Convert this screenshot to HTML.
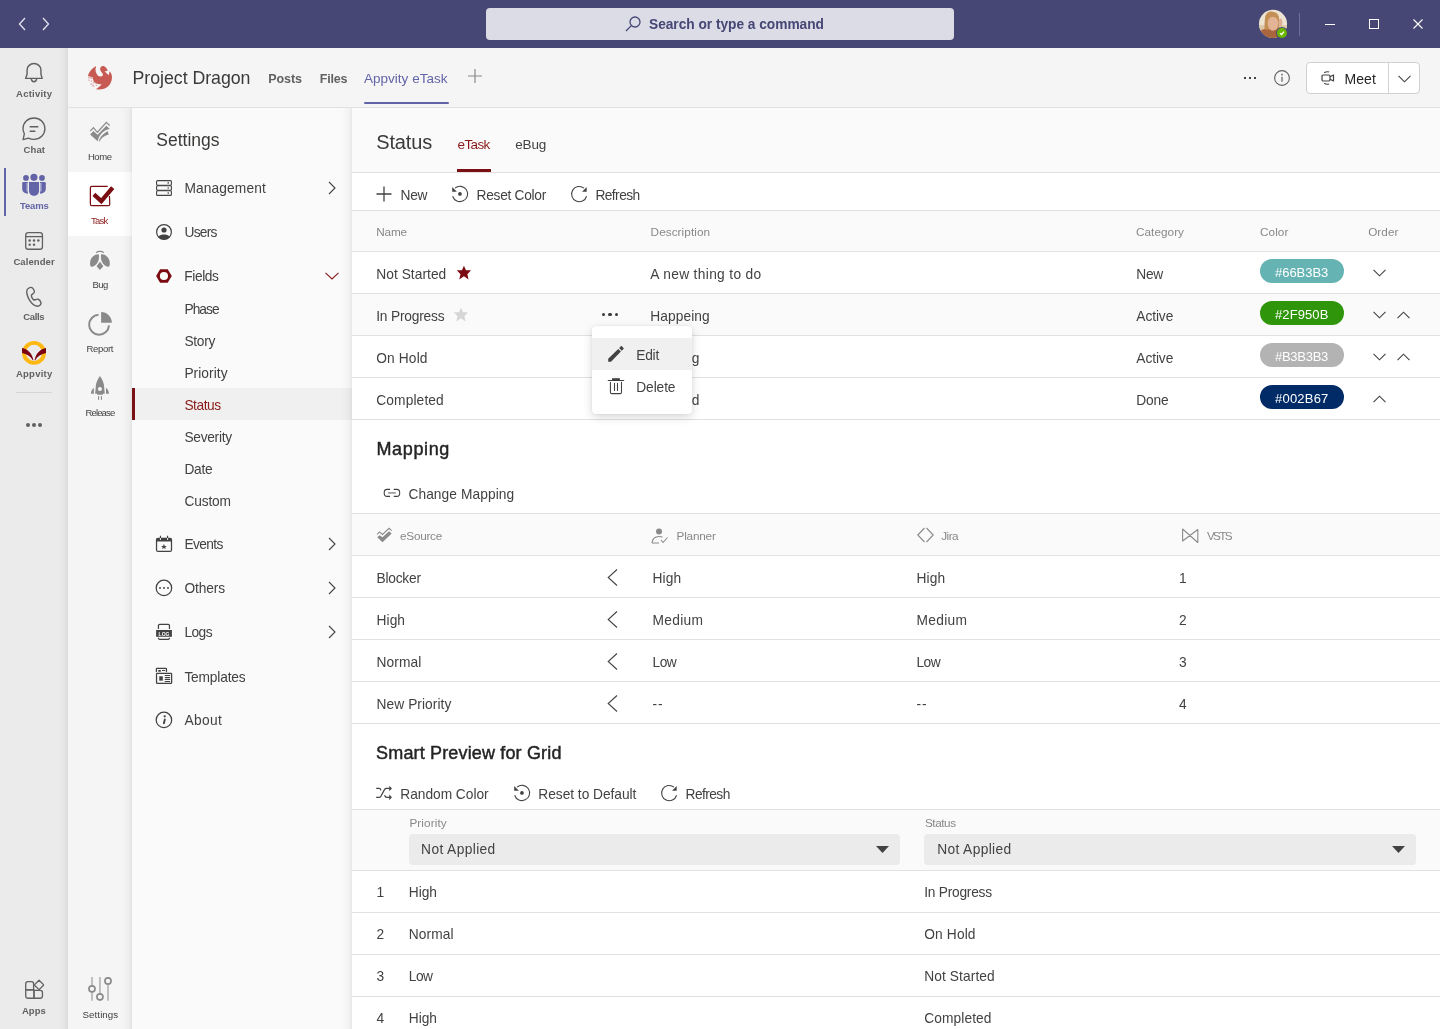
<!DOCTYPE html>
<html><head><meta charset="utf-8">
<style>
*{box-sizing:border-box;margin:0;padding:0}
html,body{width:1440px;height:1029px;overflow:hidden;background:#fff;font-family:"Liberation Sans",sans-serif;color:#424242}
.a{position:absolute}
.t{position:absolute;white-space:nowrap;line-height:1}
svg{overflow:visible}
</style></head><body><div id="root" style="position:absolute;left:0;top:0;width:1440px;height:1029px;overflow:hidden;will-change:transform">
<div class="a" style="left:0px;top:0px;width:1440px;height:48px;background:#464775;"></div>
<svg class="a" style="left:18px;top:17px;" width="8" height="14" viewBox="0 0 8 14"><path d="M7 1 L1.5 7 L7 13" fill="none" stroke="#e4e4f0" stroke-width="1.3"/></svg>
<svg class="a" style="left:42px;top:17px;" width="8" height="14" viewBox="0 0 8 14"><path d="M1 1 L6.5 7 L1 13" fill="none" stroke="#e4e4f0" stroke-width="1.3"/></svg>
<div class="a" style="left:486px;top:8px;width:468px;height:32px;background:#dcdce6;border-radius:4px;"></div>
<svg class="a" style="left:625px;top:16px;" width="16" height="16" viewBox="0 0 16 16"><circle cx="10" cy="6" r="5" fill="none" stroke="#464775" stroke-width="1.3"/><path d="M6.4 9.6 L1 15" stroke="#464775" stroke-width="1.3"/></svg>
<div class="t" style="left:649.00px;top:18.00px;font-size:13.75px;color:#464775;font-weight:700;letter-spacing:-0.033px;">Search or type a command</div>
<svg class="a" style="left:1256px;top:8px" width="34" height="34" viewBox="0 0 1029 1029.0"><defs><clipPath id="av"><circle cx="515" cy="480" r="425"/></clipPath></defs><g clip-path="url(#av)"><rect width="1029" height="1029" fill="#ede3d3"/><rect x="0" y="520" width="1029" height="200" fill="#d9c7a8"/><path d="M270 330 C280 150 400 100 500 110 C640 120 720 220 700 420 L700 950 L240 950 C260 700 250 500 270 330Z" fill="#c48f55"/><path d="M120 700 C200 620 300 640 380 660 L640 660 C700 700 760 760 800 950 L100 950Z" fill="#a8653e"/><ellipse cx="515" cy="470" rx="160" ry="215" fill="#e2b394"/><path d="M330 300 C400 200 560 190 660 330 C600 250 420 240 330 300Z" fill="#c48f55"/><ellipse cx="745" cy="440" rx="55" ry="120" fill="#dcae95"/></g><circle cx="785" cy="755" r="180" fill="#464775"/><circle cx="785" cy="755" r="152" fill="#6bb700"/><path d="M725 765 L775 805 L845 715" fill="none" stroke="#fff" stroke-width="42"/></svg>
<div class="a" style="left:1299px;top:13px;width:1px;height:23px;background:#6e6f98;"></div>
<div class="a" style="left:1325px;top:24px;width:10px;height:1px;background:#fff;"></div>
<div class="a" style="left:1369px;top:19px;width:10px;height:10px;border:1px solid #fff"></div>
<svg class="a" style="left:1413px;top:19px;" width="10" height="10" viewBox="0 0 10 10"><path d="M0.5 0.5 L9.5 9.5 M9.5 0.5 L0.5 9.5" stroke="#fff" stroke-width="1.1"/></svg>
<div class="a" style="left:0px;top:48px;width:68px;height:981px;background:#ebebeb;"></div>
<svg class="a" style="left:20px;top:58px" width="28" height="28" viewBox="0 0 1029 1029.0"><path d="M260 600 L260 440 C260 300 380 205 512 205 C645 205 770 300 770 440 L770 600 L815 750 L205 750Z" fill="none" stroke="#616161" stroke-width="52" stroke-linejoin="round"/><path d="M412 760 C420 830 460 870 512 870 C565 870 605 830 612 760" fill="none" stroke="#616161" stroke-width="52"/></svg>
<div class="t" style="left:16.10px;top:89.00px;font-size:9.5px;color:#616161;font-weight:700;letter-spacing:0.229px;">Activity</div>
<svg class="a" style="left:20px;top:114px" width="28" height="28" viewBox="0 0 1029 1029.0"><path d="M160 720 C125 660 110 600 110 540 C110 320 290 145 512 145 C735 145 915 320 915 540 C915 760 735 935 512 935 C430 935 365 915 310 885 L115 940 Z" fill="none" stroke="#616161" stroke-width="50" stroke-linejoin="round"/><path d="M375 465 H655 M375 630 H545" stroke="#616161" stroke-width="55" stroke-linecap="round"/></svg>
<div class="t" style="left:23.50px;top:145.00px;font-size:9.5px;color:#616161;font-weight:700;letter-spacing:0.133px;">Chat</div>
<div class="a" style="left:4px;top:168px;width:2px;height:48px;background:#6264a7;"></div>
<svg class="a" style="left:20px;top:170px" width="28" height="28" viewBox="0 0 1029 1029.0"><g fill="#6264a7"><circle cx="220" cy="290" r="105"/><circle cx="512" cy="270" r="130"/><circle cx="808" cy="290" r="105"/><path d="M125 445 H290 V870 C165 870 80 790 80 690 V490 Q80 445 125 445Z"/><path d="M903 445 H738 V870 C863 870 948 790 948 690 V490 Q948 445 903 445Z"/><path d="M330 445 H700 V760 C700 870 615 945 515 945 C415 945 330 870 330 760Z"/></g><path d="M265 480 V790 M765 480 V790" stroke="#b3b4d6" stroke-width="50"/></svg>
<div class="t" style="left:20.00px;top:201.00px;font-size:9.5px;color:#6264a7;font-weight:700;letter-spacing:-0.175px;">Teams</div>
<svg class="a" style="left:20px;top:226px" width="28" height="28" viewBox="0 0 1029 1029.0"><rect x="210" y="245" width="615" height="610" rx="95" fill="none" stroke="#616161" stroke-width="48"/><path d="M210 390 H825" stroke="#616161" stroke-width="48"/><g fill="#616161"><circle cx="355" cy="535" r="45"/><circle cx="515" cy="535" r="45"/><circle cx="675" cy="535" r="45"/><circle cx="355" cy="685" r="45"/><circle cx="515" cy="685" r="45"/></g></svg>
<div class="t" style="left:13.40px;top:257.00px;font-size:9.5px;color:#616161;font-weight:700;letter-spacing:0.079px;">Calender</div>
<svg class="a" style="left:20px;top:282px" width="28" height="28" viewBox="0 0 1029 1029.0"><path d="M300 240 C360 200 430 185 465 225 C520 290 540 340 520 385 C500 425 445 440 425 475 C400 525 455 620 515 665 C565 650 620 620 665 632 C710 645 755 705 772 760 C785 820 725 880 640 890 C520 882 420 790 340 650 C270 520 240 420 250 330 C255 290 270 260 300 240Z" fill="none" stroke="#616161" stroke-width="52" stroke-linejoin="round"/></svg>
<div class="t" style="left:23.20px;top:312.00px;font-size:9.5px;color:#616161;font-weight:700;letter-spacing:-0.350px;">Calls</div>
<svg class="a" style="left:20px;top:339px" width="28" height="28" viewBox="0 0 1029 1029.0"><circle cx="515" cy="510" r="368" fill="none" stroke="#fdb813" stroke-width="145"/><path d="M75 330 C260 370 440 500 495 785 L470 785 C390 630 250 540 75 512Z" fill="#7a0012"/><path d="M955 330 C770 370 590 500 535 785 L560 785 C640 630 780 540 955 512Z" fill="#7a0012"/></svg>
<div class="t" style="left:15.90px;top:369.00px;font-size:9.5px;color:#616161;font-weight:700;letter-spacing:0.258px;">Appvity</div>
<div class="a" style="left:16px;top:392px;width:36px;height:1px;background:#d6d6d6;"></div>
<div class="a" style="left:26px;top:423px;width:4px;height:4px;border-radius:50%;background:#616161"></div>
<div class="a" style="left:32px;top:423px;width:4px;height:4px;border-radius:50%;background:#616161"></div>
<div class="a" style="left:38px;top:423px;width:4px;height:4px;border-radius:50%;background:#616161"></div>
<svg class="a" style="left:20px;top:975px" width="28" height="28" viewBox="0 0 1029 1029.0"><g fill="none" stroke="#616161" stroke-width="48" stroke-linejoin="round"><path d="M290 245 H420 Q500 245 500 325 V550 H210 V325 Q210 245 290 245Z"/><path d="M210 550 H515 V855 H290 Q210 855 210 775Z"/><path d="M515 565 H745 Q825 565 825 645 V775 Q825 855 745 855 H515Z"/><path d="M700 190 L855 345 Q875 365 855 385 L720 520 Q700 540 680 520 L545 385 Q525 365 545 345Z"/></g></svg>
<div class="t" style="left:22.00px;top:1006.00px;font-size:9.5px;color:#616161;font-weight:700;letter-spacing:0.000px;">Apps</div>
<div class="a" style="left:68px;top:48px;width:1372px;height:60px;background:#f5f5f5;border-bottom:1px solid #e1e1e1;"></div>
<svg class="a" style="left:84px;top:62px" width="32" height="32" viewBox="0 0 1029 1029.0"><path d="M390 130 C350 250 370 360 450 440 C500 470 560 475 600 440 C620 400 600 360 560 320 C520 280 505 230 530 180 C560 140 610 125 650 135 C700 160 740 220 765 275 L700 300 L665 290 L700 335 C740 370 770 400 790 425 L830 300 C870 350 900 420 900 490 C900 600 860 700 780 780 C700 850 600 885 480 885 L380 880 C440 840 520 780 570 725 C500 715 420 700 330 640 C300 600 280 540 280 490 L130 450 C150 330 250 210 390 130Z" fill="#c75b53"/><g fill="#c75b53" opacity="0.45"><rect x="130" y="470" width="50" height="60"/><rect x="200" y="480" width="60" height="60"/><rect x="140" y="560" width="40" height="50"/><rect x="220" y="590" width="40" height="50"/><rect x="290" y="640" width="50" height="50"/><rect x="360" y="640" width="70" height="60"/><rect x="210" y="690" width="60" height="50"/><rect x="270" y="740" width="60" height="50"/><rect x="380" y="730" width="40" height="40"/></g></svg>
<div class="t" style="left:132.50px;top:70.00px;font-size:17.75px;color:#3b3a39;letter-spacing:-0.031px;">Project Dragon</div>
<div class="t" style="left:268.30px;top:73.00px;font-size:12.5px;color:#616161;font-weight:700;letter-spacing:-0.087px;">Posts</div>
<div class="t" style="left:319.70px;top:73.00px;font-size:12.5px;color:#616161;font-weight:700;letter-spacing:-0.175px;">Files</div>
<div class="t" style="left:364.00px;top:72.00px;font-size:13.5px;color:#6264a7;letter-spacing:0.013px;">Appvity eTask</div>
<div class="a" style="left:364px;top:102px;width:85px;height:2px;background:#6264a7;border-radius:1px;"></div>
<svg class="a" style="left:468px;top:69px;" width="14" height="14" viewBox="0 0 14 14"><path d="M7 0 V14 M0 7 H14" stroke="#8a8a8a" stroke-width="1.2"/></svg>
<div class="a" style="left:1244px;top:77px;width:2px;height:2px;background:#424242;"></div>
<div class="a" style="left:1249px;top:77px;width:2px;height:2px;background:#424242;"></div>
<div class="a" style="left:1254px;top:77px;width:2px;height:2px;background:#424242;"></div>
<svg class="a" style="left:1274px;top:70px;" width="16" height="16" viewBox="0 0 16 16"><circle cx="8" cy="8" r="7.4" fill="none" stroke="#616161" stroke-width="1.1"/><circle cx="8" cy="4.6" r="0.9" fill="#616161"/><path d="M8 6.8 V11.8" stroke="#616161" stroke-width="1.2"/></svg>
<div class="a" style="left:1306px;top:62px;width:114px;height:32px;background:#fff;border:1px solid #d1d1d1;border-radius:4px"></div>
<div class="a" style="left:1388px;top:63px;width:1px;height:30px;background:#d1d1d1;"></div>
<svg class="a" style="left:1321px;top:71px;" width="14" height="14" viewBox="0 0 14 14"><path d="M3.2 1.8 A6 6 0 0 1 8.2 1 M3.2 12.2 A6 6 0 0 0 8.2 13" fill="none" stroke="#424242" stroke-width="1.1"/><rect x="1" y="4" width="8" height="6" rx="1.2" fill="none" stroke="#424242" stroke-width="1.2"/><path d="M9 5.8 L12.5 4 V10 L9 8.2" fill="none" stroke="#424242" stroke-width="1.2" stroke-linejoin="round"/></svg>
<div class="t" style="left:1344.60px;top:72.00px;font-size:14px;color:#252424;letter-spacing:0.033px;">Meet</div>
<svg class="a" style="left:1398px;top:75px;" width="13" height="8" viewBox="0 0 13 8"><path d="M0.5 0.8 L6.5 6.8 L12.5 0.8" fill="none" stroke="#424242" stroke-width="1.1"/></svg>
<div class="a" style="left:68px;top:108px;width:64px;height:921px;background:#f5f5f5;"></div>
<svg class="a" style="left:86px;top:118px" width="30" height="30" viewBox="0 0 1029 1029.0"><path d="M145 450 L255 330 L390 490 L700 150 L815 262" fill="none" stroke="#8a8a8a" stroke-width="42" stroke-linejoin="miter"/><path d="M140 565 L255 450 L395 575 L700 270 L815 380 C700 400 600 450 520 540 C460 610 420 700 400 800Z" fill="#8a8a8a"/><path d="M440 805 C470 680 540 590 740 450 L780 570 C640 600 520 680 460 810Z" fill="#8a8a8a"/></svg>
<div class="t" style="left:87.90px;top:152.00px;font-size:9.5px;color:#424242;letter-spacing:-0.383px;">Home</div>
<div class="a" style="left:68px;top:172px;width:64px;height:64px;background:#ffffff;"></div>
<svg class="a" style="left:86px;top:182px" width="30" height="30" viewBox="0 0 1029 1029.0"><path d="M745 150 L200 150 Q150 150 150 200 L150 760 Q150 810 200 810 L765 810 Q815 810 815 760 L805 480" fill="none" stroke="#7a0d12" stroke-width="42"/><path d="M270 425 L525 655 L915 195" fill="none" stroke="#7a0d12" stroke-width="145"/></svg>
<div class="t" style="left:91.10px;top:216.00px;font-size:9.5px;color:#8b1a1a;letter-spacing:-0.833px;">Task</div>
<svg class="a" style="left:86px;top:246px" width="28" height="28" viewBox="0 0 1029 1029.0"><g fill="#8a8a8a"><path d="M355 245 C400 150 625 150 670 245 L620 255 C580 215 445 215 405 255Z"/><path d="M465 300 C330 290 170 400 150 600 C140 700 165 765 205 765 C360 730 470 600 475 420 C478 350 475 310 465 300Z"/><path d="M560 300 C695 290 855 400 875 600 C885 700 860 765 820 765 C665 730 555 600 550 420 C547 350 550 310 560 300Z"/><path d="M512 580 L635 740 L512 885 L390 740Z"/></g></svg>
<div class="t" style="left:92.50px;top:280.00px;font-size:9.5px;color:#424242;letter-spacing:-0.600px;">Bug</div>
<svg class="a" style="left:86px;top:309px" width="28" height="28" viewBox="0 0 1029 1029.0"><path d="M460 215 A365 365 0 1 0 845 600" fill="none" stroke="#8a8a8a" stroke-width="72"/><path d="M555 110 A395 395 0 0 1 950 505 L555 505Z" fill="#8a8a8a"/></svg>
<div class="t" style="left:86.40px;top:344.00px;font-size:9.5px;color:#424242;letter-spacing:-0.280px;">Report</div>
<svg class="a" style="left:86px;top:373px" width="28" height="28" viewBox="0 0 1029 1029.0"><g fill="#8a8a8a"><path d="M512 110 C580 200 640 320 660 440 L690 760 L620 760 L620 800 L410 800 L410 760 L335 760 L365 440 C385 320 445 200 512 110Z"/><path d="M290 545 C220 600 180 680 185 765 L290 765Z"/><path d="M735 545 C805 600 845 680 840 765 L735 765Z"/><rect x="442" y="850" width="40" height="135"/><rect x="548" y="850" width="40" height="135"/></g><circle cx="512" cy="590" r="75" fill="#f5f5f5"/></svg>
<div class="t" style="left:85.50px;top:408.00px;font-size:9.5px;color:#424242;letter-spacing:-0.858px;">Release</div>
<svg class="a" style="left:86px;top:974px" width="28" height="28" viewBox="0 0 1029 1029.0"><path d="M220 110 V980 M512 110 V980 M808 110 V980" stroke="#b5b5b5" stroke-width="62"/><g fill="#f5f5f5" stroke="#8a8a8a" stroke-width="62"><circle cx="220" cy="545" r="112"/><circle cx="512" cy="840" r="112"/><circle cx="808" cy="255" r="112"/></g></svg>
<div class="t" style="left:82.50px;top:1010.00px;font-size:9.75px;color:#424242;letter-spacing:0.071px;">Settings</div>
<div class="a" style="left:132px;top:108px;width:220px;height:921px;background:#fafafa;"></div>
<div class="t" style="left:156.30px;top:132.00px;font-size:17.5px;color:#3b3a39;letter-spacing:-0.007px;">Settings</div>
<svg class="a" style="left:156px;top:180px;" width="16" height="16" viewBox="0 0 16 16"><rect x="0.6" y="0.6" width="14.8" height="4.6" rx="1" fill="none" stroke="#424242" stroke-width="1.1"/><rect x="0.6" y="5.7" width="14.8" height="4.6" rx="1" fill="none" stroke="#424242" stroke-width="1.1"/><rect x="0.6" y="10.8" width="14.8" height="4.6" rx="1" fill="none" stroke="#424242" stroke-width="1.1"/><circle cx="12.2" cy="2.9" r="0.8" fill="#424242"/><circle cx="12.2" cy="8" r="0.8" fill="#424242"/><circle cx="12.2" cy="13.1" r="0.8" fill="#424242"/></svg>
<div class="t" style="left:184.50px;top:182.00px;font-size:13.75px;color:#424242;letter-spacing:0.106px;">Management</div>
<svg class="a" style="left:328px;top:181px;" width="8" height="14" viewBox="0 0 8 14"><path d="M1 1 L7 7 L1 13" fill="none" stroke="#424242" stroke-width="1.1"/></svg>
<svg class="a" style="left:156px;top:224px;" width="16" height="16" viewBox="0 0 16 16"><defs><clipPath id="uc"><circle cx="8" cy="8" r="7.5"/></clipPath></defs><circle cx="8" cy="8" r="7.4" fill="none" stroke="#424242" stroke-width="1.2"/><circle cx="8" cy="6" r="2.6" fill="#424242"/><path d="M1 16 C2 11.5 5 10.5 8 10.5 C11 10.5 14 11.5 15 16Z" fill="#424242" clip-path="url(#uc)"/></svg>
<div class="t" style="left:184.50px;top:226.00px;font-size:13.75px;color:#424242;letter-spacing:-0.775px;">Users</div>
<svg class="a" style="left:150px;top:262px" width="28" height="28" viewBox="0 0 1029 1029.0"><path d="M370 265 H650 L800 512 L650 765 H370 L225 512Z" fill="#7a0a12"/><circle cx="512" cy="515" r="150" fill="#fafafa"/></svg>
<div class="t" style="left:184.30px;top:270.00px;font-size:13.75px;color:#424242;letter-spacing:-0.420px;">Fields</div>
<svg class="a" style="left:325px;top:272px;" width="14" height="8" viewBox="0 0 14 8"><path d="M0.5 0.8 L7 7 L13.5 0.8" fill="none" stroke="#8b1a1a" stroke-width="1.1"/></svg>
<div class="a" style="left:132px;top:388px;width:220px;height:32px;background:#f0f0f0;"></div>
<div class="a" style="left:132px;top:388px;width:3px;height:32px;background:#7a0f14;"></div>
<div class="t" style="left:184.40px;top:303.00px;font-size:13.75px;color:#424242;letter-spacing:-0.925px;">Phase</div>
<div class="t" style="left:184.40px;top:335.00px;font-size:13.75px;color:#424242;letter-spacing:-0.275px;">Story</div>
<div class="t" style="left:184.40px;top:367.00px;font-size:13.75px;color:#424242;letter-spacing:0.057px;">Priority</div>
<div class="t" style="left:184.40px;top:399.00px;font-size:13.75px;color:#8b1a1a;letter-spacing:-0.440px;">Status</div>
<div class="t" style="left:184.40px;top:431.00px;font-size:13.75px;color:#424242;letter-spacing:-0.279px;">Severity</div>
<div class="t" style="left:184.40px;top:463.00px;font-size:13.75px;color:#424242;letter-spacing:-0.283px;">Date</div>
<div class="t" style="left:184.40px;top:495.00px;font-size:13.75px;color:#424242;letter-spacing:-0.150px;">Custom</div>
<svg class="a" style="left:150px;top:530px" width="28" height="28" viewBox="0 0 1029 1029.0"><rect x="240" y="305" width="550" height="485" rx="55" fill="none" stroke="#424242" stroke-width="46"/><path d="M240 360 Q240 305 295 305 H735 Q790 305 790 360 V425 H240Z" fill="#424242"/><rect x="365" y="300" width="40" height="60" fill="#fafafa"/><rect x="625" y="300" width="40" height="60" fill="#fafafa"/><path d="M385 215 V290 M645 215 V290" stroke="#424242" stroke-width="42"/><path d="M512 505 L540 585 L622 585 L556 632 L580 712 L512 663 L444 712 L468 632 L402 585 L484 585Z" fill="#424242"/></svg>
<div class="t" style="left:184.40px;top:538.00px;font-size:13.75px;color:#424242;letter-spacing:-0.610px;">Events</div>
<svg class="a" style="left:328px;top:537px;" width="8" height="14" viewBox="0 0 8 14"><path d="M1 1 L7 7 L1 13" fill="none" stroke="#424242" stroke-width="1.1"/></svg>
<svg class="a" style="left:150px;top:574px" width="28" height="28" viewBox="0 0 1029 1029.0"><circle cx="512" cy="512" r="285" fill="none" stroke="#424242" stroke-width="46"/><g fill="#424242"><rect x="337" y="482" width="62" height="62"/><rect x="482" y="482" width="62" height="62"/><rect x="630" y="482" width="62" height="62"/></g></svg>
<div class="t" style="left:184.40px;top:582.00px;font-size:13.75px;color:#424242;letter-spacing:-0.090px;">Others</div>
<svg class="a" style="left:328px;top:581px;" width="8" height="14" viewBox="0 0 8 14"><path d="M1 1 L7 7 L1 13" fill="none" stroke="#424242" stroke-width="1.1"/></svg>
<svg class="a" style="left:150px;top:618px" width="28" height="28" viewBox="0 0 1029 1029.0"><g fill="none" stroke="#424242" stroke-width="46" stroke-linecap="round"><path d="M310 385 V280 Q310 235 360 235 H670 Q715 235 715 280 V385"/><path d="M310 745 Q330 790 370 790 H660 Q700 790 715 745"/></g><rect x="225" y="440" width="580" height="250" fill="#424242"/><text x="515" y="652" font-size="215" font-family="Liberation Sans" font-weight="700" fill="#fafafa" text-anchor="middle" textLength="400" lengthAdjust="spacingAndGlyphs">LOG</text></svg>
<div class="t" style="left:184.40px;top:626.00px;font-size:13.75px;color:#424242;letter-spacing:-0.567px;">Logs</div>
<svg class="a" style="left:328px;top:625px;" width="8" height="14" viewBox="0 0 8 14"><path d="M1 1 L7 7 L1 13" fill="none" stroke="#424242" stroke-width="1.1"/></svg>
<svg class="a" style="left:150px;top:662px" width="28" height="28" viewBox="0 0 1029 1029.0"><g fill="none" stroke="#424242" stroke-width="46"><path d="M235 350 V260 Q235 232 263 232 H577 Q605 232 605 260 V350" stroke-linecap="round"/><rect x="240" y="415" width="555" height="375" rx="30"/><path d="M560 495 H725 M560 570 H725 M560 640 H725 M560 715 H725" stroke-width="40" stroke-linecap="round"/><path d="M455 312 H540" stroke-width="36" stroke-linecap="round"/></g><rect x="305" y="298" width="92" height="58" rx="8" fill="#424242"/><rect x="340" y="525" width="130" height="160" fill="#424242"/></svg>
<div class="t" style="left:184.40px;top:671.00px;font-size:13.75px;color:#424242;letter-spacing:-0.169px;">Templates</div>
<svg class="a" style="left:150px;top:706px" width="28" height="28" viewBox="0 0 1029 1029.0"><circle cx="512" cy="512" r="285" fill="none" stroke="#424242" stroke-width="46"/><circle cx="540" cy="378" r="42" fill="#424242"/><path d="M545 495 L510 635" stroke="#424242" stroke-width="68" stroke-linecap="round"/></svg>
<div class="t" style="left:184.40px;top:714.00px;font-size:13.75px;color:#424242;letter-spacing:0.362px;">About</div>
<div class="a" style="left:352px;top:108px;width:1088px;height:921px;background:#ffffff;"></div>
<div class="a" style="left:352px;top:108px;width:1088px;height:65px;background:#fafafa;border-bottom:1px solid #e1e1e1;"></div>
<div class="t" style="left:376.30px;top:132.00px;font-size:20px;color:#3b3a39;letter-spacing:-0.160px;">Status</div>
<div class="t" style="left:457.60px;top:138.00px;font-size:13.5px;color:#8b1a1a;letter-spacing:-0.625px;">eTask</div>
<div class="a" style="left:457px;top:169px;width:34px;height:3px;background:#7a0f14;"></div>
<div class="t" style="left:515.30px;top:138.00px;font-size:13.5px;color:#424242;letter-spacing:-0.183px;">eBug</div>
<svg class="a" style="left:376px;top:186px;" width="16" height="16" viewBox="0 0 16 16"><path d="M8 0.5 V15.5 M0.5 8 H15.5" stroke="#424242" stroke-width="1.3"/></svg>
<div class="t" style="left:400.60px;top:189.00px;font-size:13.75px;color:#424242;letter-spacing:-0.350px;">New</div>
<svg class="a" style="left:448px;top:182px" width="24" height="24" viewBox="0 0 1029 1029.0"><path d="M200 610 A328 328 0 1 0 300 262" fill="none" stroke="#424242" stroke-width="46"/><path d="M180 215 L180 415 L380 415Z" fill="#424242"/><circle cx="512" cy="512" r="80" fill="#424242"/></svg>
<div class="t" style="left:476.60px;top:189.00px;font-size:13.75px;color:#424242;letter-spacing:-0.290px;">Reset Color</div>
<svg class="a" style="left:567px;top:182px" width="24" height="24" viewBox="0 0 1029 1029.0"><path d="M840 610 A328 328 0 1 1 730 262" fill="none" stroke="#424242" stroke-width="46"/><path d="M845 215 L845 415 L645 415Z" fill="#424242"/></svg>
<div class="t" style="left:595.40px;top:189.00px;font-size:13.75px;color:#424242;letter-spacing:-0.558px;">Refresh</div>
<div class="a" style="left:352px;top:210px;width:1088px;height:1px;background:#e1e1e1;"></div>
<div class="a" style="left:352px;top:211px;width:1088px;height:41px;background:#fafafa;border-bottom:1px solid #e1e1e1;"></div>
<div class="t" style="left:376.30px;top:226.00px;font-size:11.75px;color:#8a8886;letter-spacing:-0.217px;">Name</div>
<div class="t" style="left:650.60px;top:226.00px;font-size:11.75px;color:#8a8886;letter-spacing:0.065px;">Description</div>
<div class="t" style="left:1136.00px;top:226.00px;font-size:11.75px;color:#8a8886;letter-spacing:0.043px;">Category</div>
<div class="t" style="left:1260.00px;top:226.00px;font-size:11.75px;color:#8a8886;letter-spacing:0.075px;">Color</div>
<div class="t" style="left:1368.20px;top:226.00px;font-size:11.75px;color:#8a8886;letter-spacing:0.037px;">Order</div>
<div class="a" style="left:352px;top:252px;width:1088px;height:42px;background:#ffffff;border-bottom:1px solid #e1e1e1;"></div>
<div class="t" style="left:376.25px;top:268.00px;font-size:13.75px;color:#424242;letter-spacing:0.045px;">Not Started</div>
<div class="t" style="left:650.30px;top:268.00px;font-size:13.75px;color:#424242;letter-spacing:0.338px;">A new thing to do</div>
<div class="t" style="left:1136.30px;top:268.00px;font-size:13.75px;color:#424242;letter-spacing:-0.350px;">New</div>
<div class="a" style="left:1260px;top:259.4px;width:84px;height:24.1px;border-radius:12px;background:#66B3B3"></div>
<div class="t" style="left:1275.00px;top:266.00px;font-size:13px;color:#ffffff;letter-spacing:-0.033px;">#66B3B3</div>
<svg class="a" style="left:1373px;top:269px;" width="13" height="8" viewBox="0 0 13 8"><path d="M0.5 0.8 L6.5 6.8 L12.5 0.8" fill="none" stroke="#424242" stroke-width="1.1"/></svg>
<div class="a" style="left:352px;top:294px;width:1088px;height:42px;background:#fafafa;border-bottom:1px solid #e1e1e1;"></div>
<div class="t" style="left:376.25px;top:310.00px;font-size:13.75px;color:#424242;letter-spacing:-0.205px;">In Progress</div>
<div class="t" style="left:650.30px;top:310.00px;font-size:13.75px;color:#424242;letter-spacing:0.064px;">Happeing</div>
<div class="t" style="left:1136.30px;top:310.00px;font-size:13.75px;color:#424242;letter-spacing:-0.090px;">Active</div>
<div class="a" style="left:1260px;top:301.4px;width:84px;height:24.1px;border-radius:12px;background:#2F950B"></div>
<div class="t" style="left:1275.00px;top:308.00px;font-size:13px;color:#ffffff;letter-spacing:0.092px;">#2F950B</div>
<svg class="a" style="left:1373px;top:311px;" width="13" height="8" viewBox="0 0 13 8"><path d="M0.5 0.8 L6.5 6.8 L12.5 0.8" fill="none" stroke="#424242" stroke-width="1.1"/></svg>
<svg class="a" style="left:1397px;top:311px;" width="13" height="8" viewBox="0 0 13 8"><path d="M0.5 7.2 L6.5 1.2 L12.5 7.2" fill="none" stroke="#424242" stroke-width="1.1"/></svg>
<div class="a" style="left:352px;top:336px;width:1088px;height:42px;background:#ffffff;border-bottom:1px solid #e1e1e1;"></div>
<div class="t" style="left:376.25px;top:352.00px;font-size:13.75px;color:#424242;letter-spacing:0.133px;">On Hold</div>
<div class="t" style="left:650.30px;top:352.00px;font-size:13.75px;color:#424242;letter-spacing:-0.242px;">Pending</div>
<div class="t" style="left:1136.30px;top:352.00px;font-size:13.75px;color:#424242;letter-spacing:-0.090px;">Active</div>
<div class="a" style="left:1260px;top:343.4px;width:84px;height:24.1px;border-radius:12px;background:#B3B3B3"></div>
<div class="t" style="left:1275.00px;top:350.00px;font-size:13px;color:#ffffff;letter-spacing:-0.275px;">#B3B3B3</div>
<svg class="a" style="left:1373px;top:353px;" width="13" height="8" viewBox="0 0 13 8"><path d="M0.5 0.8 L6.5 6.8 L12.5 0.8" fill="none" stroke="#424242" stroke-width="1.1"/></svg>
<svg class="a" style="left:1397px;top:353px;" width="13" height="8" viewBox="0 0 13 8"><path d="M0.5 7.2 L6.5 1.2 L12.5 7.2" fill="none" stroke="#424242" stroke-width="1.1"/></svg>
<div class="a" style="left:352px;top:378px;width:1088px;height:42px;background:#ffffff;border-bottom:1px solid #e1e1e1;"></div>
<div class="t" style="left:376.25px;top:394.00px;font-size:13.75px;color:#424242;letter-spacing:0.125px;">Completed</div>
<div class="t" style="left:650.30px;top:394.00px;font-size:13.75px;color:#424242;letter-spacing:-0.421px;">Finished</div>
<div class="t" style="left:1136.30px;top:394.00px;font-size:13.75px;color:#424242;letter-spacing:-0.150px;">Done</div>
<div class="a" style="left:1260px;top:385.4px;width:84px;height:24.1px;border-radius:12px;background:#002B67"></div>
<div class="t" style="left:1275.00px;top:392.00px;font-size:13px;color:#ffffff;letter-spacing:0.208px;">#002B67</div>
<svg class="a" style="left:1373px;top:395px;" width="13" height="8" viewBox="0 0 13 8"><path d="M0.5 7.2 L6.5 1.2 L12.5 7.2" fill="none" stroke="#424242" stroke-width="1.1"/></svg>
<svg class="a" style="left:452px;top:261px" width="24" height="24" viewBox="0 0 1029 1029.0"><path d="M512 200 L600 400 L815 400 L660 570 L710 790 L512 650 L310 790 L365 570 L205 400 L425 400Z" fill="#7a0a12"/></svg>
<svg class="a" style="left:449px;top:303px" width="24" height="24" viewBox="0 0 1029 1029.0"><path d="M512 200 L600 400 L815 400 L660 570 L710 790 L512 650 L310 790 L365 570 L205 400 L425 400Z" fill="#d6d6d6"/></svg>
<div class="a" style="left:601.9px;top:312.8px;width:3.2px;height:3.2px;border-radius:50%;background:#3a3a3a"></div>
<div class="a" style="left:608.4px;top:312.8px;width:3.2px;height:3.2px;border-radius:50%;background:#3a3a3a"></div>
<div class="a" style="left:614.8px;top:312.8px;width:3.2px;height:3.2px;border-radius:50%;background:#3a3a3a"></div>
<div class="a" style="left:592px;top:326px;width:100px;height:88px;background:#fff;border-radius:4px;box-shadow:0 3px 10px rgba(0,0,0,0.16),0 0 2px rgba(0,0,0,0.08)"></div>
<div class="a" style="left:592px;top:338px;width:100px;height:32px;background:#f0f0f0;"></div>
<svg class="a" style="left:604px;top:342px" width="24" height="24" viewBox="0 0 1029 1029.0"><path d="M180 720 L610 295 L725 405 L300 845 L180 845Z M650 260 L745 165 L855 275 L760 375Z" fill="#424242"/></svg>
<div class="t" style="left:636.25px;top:349.00px;font-size:13.75px;color:#424242;letter-spacing:-0.233px;">Edit</div>
<svg class="a" style="left:604px;top:374px" width="24" height="24" viewBox="0 0 1029 1029.0"><g fill="none" stroke="#424242" stroke-width="46" stroke-linecap="round"><path d="M180 275 H845"/><path d="M275 360 V780 Q275 840 335 840 H690 Q750 840 750 780 V360"/><path d="M450 400 V710 M578 400 V710"/></g><rect x="345" y="180" width="335" height="95" fill="#424242"/></svg>
<div class="t" style="left:636.25px;top:381.00px;font-size:13.75px;color:#424242;letter-spacing:-0.100px;">Delete</div>
<div class="t" style="left:376.50px;top:440.00px;font-size:18px;color:#252424;letter-spacing:0.625px;-webkit-text-stroke:0.45px #252424;">Mapping</div>
<svg class="a" style="left:380px;top:481px" width="24" height="24" viewBox="0 0 1029 1029.0"><g fill="none" stroke="#424242" stroke-width="46"><path d="M430 360 H300 C230 360 180 430 180 510 C180 590 230 660 300 660 H430"/><path d="M590 360 H720 C790 360 845 430 845 510 C845 590 790 660 720 660 H590"/></g><path d="M345 510 H680" stroke="#8a8a8a" stroke-width="62"/></svg>
<div class="t" style="left:408.40px;top:488.00px;font-size:13.75px;color:#424242;letter-spacing:0.081px;">Change Mapping</div>
<div class="a" style="left:352px;top:513px;width:1088px;height:43px;background:#fafafa;border-top:1px solid #e1e1e1;border-bottom:1px solid #e1e1e1;"></div>
<svg class="a" style="left:372px;top:523px" width="24" height="24" viewBox="0 0 1029 1029.0"><path d="M220 490 L320 385 L450 490 L730 225 L840 330" fill="none" stroke="#8a8a8a" stroke-width="46"/><path d="M225 615 L320 520 L450 610 L730 355 L845 450 L450 830Z" fill="#8a8a8a"/></svg>
<div class="t" style="left:400.10px;top:530.00px;font-size:11.75px;color:#8a8886;letter-spacing:-0.275px;">eSource</div>
<svg class="a" style="left:651px;top:528px;" width="18" height="16" viewBox="0 0 18 16"><circle cx="8" cy="3.5" r="3" fill="#8a8a8a"/><path d="M1 15 C1.5 10 4 8.5 8 8.5 C9.5 8.5 10.5 8.7 11.5 9.2" fill="none" stroke="#8a8a8a" stroke-width="1.1"/><path d="M1 15 H8 M10 12 L12 14.5 L16.5 9.5" fill="none" stroke="#8a8a8a" stroke-width="1.1"/></svg>
<div class="t" style="left:676.60px;top:530.00px;font-size:11.75px;color:#8a8886;letter-spacing:-0.217px;">Planner</div>
<svg class="a" style="left:917px;top:527px;" width="17" height="16" viewBox="0 0 17 16"><path d="M7.5 1 L0.8 8 L7.5 15 M9.5 1 L16.2 8 L9.5 15" fill="none" stroke="#8a8a8a" stroke-width="1.1"/></svg>
<div class="t" style="left:941.30px;top:530.00px;font-size:11.75px;color:#8a8886;letter-spacing:-0.550px;">Jira</div>
<svg class="a" style="left:1182px;top:527px;" width="17" height="16" viewBox="0 0 17 16"><path d="M0.6 2 V14 L15.8 2.5 V15.5 L0.6 2Z" fill="none" stroke="#8a8a8a" stroke-width="1.1" stroke-linejoin="round"/></svg>
<div class="t" style="left:1207.00px;top:530.00px;font-size:11.75px;color:#8a8886;letter-spacing:-1.733px;">VSTS</div>
<div class="a" style="left:352px;top:556px;width:1088px;height:42px;background:#fff;border-bottom:1px solid #e1e1e1;"></div>
<div class="t" style="left:376.60px;top:572.00px;font-size:13.75px;color:#424242;letter-spacing:-0.242px;">Blocker</div>
<svg class="a" style="left:607px;top:569px;" width="11" height="17" viewBox="0 0 11 17"><path d="M10 0.5 L1.2 8.5 L10 16.5" fill="none" stroke="#424242" stroke-width="1.1"/></svg>
<div class="t" style="left:652.60px;top:572.00px;font-size:13.75px;color:#424242;letter-spacing:0.100px;">High</div>
<div class="t" style="left:916.50px;top:572.00px;font-size:13.75px;color:#424242;letter-spacing:0.100px;">High</div>
<div class="t" style="left:1179.00px;top:572.00px;font-size:13.75px;color:#424242;">1</div>
<div class="a" style="left:352px;top:598px;width:1088px;height:42px;background:#fff;border-bottom:1px solid #e1e1e1;"></div>
<div class="t" style="left:376.60px;top:614.00px;font-size:13.75px;color:#424242;letter-spacing:0.033px;">High</div>
<svg class="a" style="left:607px;top:611px;" width="11" height="17" viewBox="0 0 11 17"><path d="M10 0.5 L1.2 8.5 L10 16.5" fill="none" stroke="#424242" stroke-width="1.1"/></svg>
<div class="t" style="left:652.60px;top:614.00px;font-size:13.75px;color:#424242;letter-spacing:0.300px;">Medium</div>
<div class="t" style="left:916.50px;top:614.00px;font-size:13.75px;color:#424242;letter-spacing:0.300px;">Medium</div>
<div class="t" style="left:1179.00px;top:614.00px;font-size:13.75px;color:#424242;">2</div>
<div class="a" style="left:352px;top:640px;width:1088px;height:42px;background:#fff;border-bottom:1px solid #e1e1e1;"></div>
<div class="t" style="left:376.60px;top:656.00px;font-size:13.75px;color:#424242;letter-spacing:0.080px;">Normal</div>
<svg class="a" style="left:607px;top:653px;" width="11" height="17" viewBox="0 0 11 17"><path d="M10 0.5 L1.2 8.5 L10 16.5" fill="none" stroke="#424242" stroke-width="1.1"/></svg>
<div class="t" style="left:652.60px;top:656.00px;font-size:13.75px;color:#424242;letter-spacing:-0.550px;">Low</div>
<div class="t" style="left:916.50px;top:656.00px;font-size:13.75px;color:#424242;letter-spacing:-0.550px;">Low</div>
<div class="t" style="left:1179.00px;top:656.00px;font-size:13.75px;color:#424242;">3</div>
<div class="a" style="left:352px;top:682px;width:1088px;height:42px;background:#fff;border-bottom:1px solid #e1e1e1;"></div>
<div class="t" style="left:376.60px;top:698.00px;font-size:13.75px;color:#424242;letter-spacing:0.055px;">New Priority</div>
<svg class="a" style="left:607px;top:695px;" width="11" height="17" viewBox="0 0 11 17"><path d="M10 0.5 L1.2 8.5 L10 16.5" fill="none" stroke="#424242" stroke-width="1.1"/></svg>
<div class="t" style="left:652.60px;top:698.00px;font-size:13.75px;color:#424242;letter-spacing:0.850px;">--</div>
<div class="t" style="left:916.50px;top:698.00px;font-size:13.75px;color:#424242;letter-spacing:0.850px;">--</div>
<div class="t" style="left:1179.00px;top:698.00px;font-size:13.75px;color:#424242;">4</div>
<div class="t" style="left:376.10px;top:744.00px;font-size:18px;color:#252424;letter-spacing:0.155px;-webkit-text-stroke:0.45px #252424;">Smart Preview for Grid</div>
<svg class="a" style="left:372px;top:781px" width="24" height="24" viewBox="0 0 1029 1029.0"><g fill="none" stroke="#424242" stroke-width="52"><path d="M180 320 H300 C340 320 370 350 385 400"/><path d="M180 700 H310 C350 700 370 680 390 640 L540 360 C560 325 580 320 620 320 H760"/><path d="M540 610 C560 680 590 700 640 700 H760"/></g><path d="M740 200 L855 320 L740 440Z M740 580 L855 700 L740 820Z" fill="#424242"/></svg>
<div class="t" style="left:400.30px;top:788.00px;font-size:13.75px;color:#424242;letter-spacing:-0.032px;">Random Color</div>
<svg class="a" style="left:510px;top:781px" width="24" height="24" viewBox="0 0 1029 1029.0"><path d="M200 610 A328 328 0 1 0 300 262" fill="none" stroke="#424242" stroke-width="46"/><path d="M180 215 L180 415 L380 415Z" fill="#424242"/><circle cx="512" cy="512" r="80" fill="#424242"/></svg>
<div class="t" style="left:538.30px;top:788.00px;font-size:13.75px;color:#424242;letter-spacing:-0.033px;">Reset to Default</div>
<svg class="a" style="left:656.5px;top:781px" width="24" height="24" viewBox="0 0 1029 1029.0"><path d="M840 610 A328 328 0 1 1 730 262" fill="none" stroke="#424242" stroke-width="46"/><path d="M845 215 L845 415 L645 415Z" fill="#424242"/></svg>
<div class="t" style="left:685.60px;top:788.00px;font-size:13.75px;color:#424242;letter-spacing:-0.575px;">Refresh</div>
<div class="a" style="left:352px;top:809px;width:1088px;height:62px;background:#fafafa;border-top:1px solid #e1e1e1;border-bottom:1px solid #e1e1e1;"></div>
<div class="t" style="left:409.40px;top:817.00px;font-size:11.75px;color:#8a8886;letter-spacing:0.100px;">Priority</div>
<div class="a" style="left:409px;top:834px;width:491px;height:31px;background:#ebebeb;border-radius:4px;"></div>
<div class="t" style="left:421.10px;top:843.00px;font-size:13.75px;color:#424242;letter-spacing:0.385px;">Not Applied</div>
<svg class="a" style="left:876px;top:846px;" width="13" height="7" viewBox="0 0 13 7"><path d="M0 0 H13 L6.5 7Z" fill="#424242"/></svg>
<div class="t" style="left:924.90px;top:817.00px;font-size:11.75px;color:#8a8886;letter-spacing:-0.420px;">Status</div>
<div class="a" style="left:924px;top:834px;width:492px;height:31px;background:#ebebeb;border-radius:4px;"></div>
<div class="t" style="left:937.20px;top:843.00px;font-size:13.75px;color:#424242;letter-spacing:0.365px;">Not Applied</div>
<svg class="a" style="left:1392px;top:846px;" width="13" height="7" viewBox="0 0 13 7"><path d="M0 0 H13 L6.5 7Z" fill="#424242"/></svg>
<div class="a" style="left:352px;top:871px;width:1088px;height:42px;background:#fff;border-bottom:1px solid #e1e1e1;"></div>
<div class="t" style="left:376.50px;top:886.00px;font-size:13.75px;color:#424242;">1</div>
<div class="t" style="left:408.80px;top:886.00px;font-size:13.75px;color:#424242;letter-spacing:-0.067px;">High</div>
<div class="t" style="left:924.30px;top:886.00px;font-size:13.75px;color:#424242;letter-spacing:-0.260px;">In Progress</div>
<div class="a" style="left:352px;top:913px;width:1088px;height:42px;background:#fff;border-bottom:1px solid #e1e1e1;"></div>
<div class="t" style="left:376.50px;top:928.00px;font-size:13.75px;color:#424242;">2</div>
<div class="t" style="left:408.80px;top:928.00px;font-size:13.75px;color:#424242;letter-spacing:0.100px;">Normal</div>
<div class="t" style="left:924.30px;top:928.00px;font-size:13.75px;color:#424242;letter-spacing:0.125px;">On Hold</div>
<div class="a" style="left:352px;top:955px;width:1088px;height:42px;background:#fff;border-bottom:1px solid #e1e1e1;"></div>
<div class="t" style="left:376.50px;top:970.00px;font-size:13.75px;color:#424242;">3</div>
<div class="t" style="left:408.80px;top:970.00px;font-size:13.75px;color:#424242;letter-spacing:-0.550px;">Low</div>
<div class="t" style="left:924.30px;top:970.00px;font-size:13.75px;color:#424242;letter-spacing:0.085px;">Not Started</div>
<div class="a" style="left:352px;top:997px;width:1088px;height:42px;background:#fff;border-bottom:1px solid #e1e1e1;"></div>
<div class="t" style="left:376.50px;top:1012.00px;font-size:13.75px;color:#424242;">4</div>
<div class="t" style="left:408.80px;top:1012.00px;font-size:13.75px;color:#424242;letter-spacing:-0.067px;">High</div>
<div class="t" style="left:924.30px;top:1012.00px;font-size:13.75px;color:#424242;letter-spacing:0.075px;">Completed</div>
<div class="a" style="left:56px;top:48px;width:12px;height:981px;background:linear-gradient(90deg,rgba(0,0,0,0) 0%,rgba(0,0,0,0.012) 45%,rgba(0,0,0,0.035) 80%,rgba(0,0,0,0.075) 100%);"></div>
<div class="a" style="left:120px;top:108px;width:12px;height:921px;background:linear-gradient(90deg,rgba(0,0,0,0) 0%,rgba(0,0,0,0.012) 45%,rgba(0,0,0,0.035) 80%,rgba(0,0,0,0.075) 100%);"></div>
<div class="a" style="left:340px;top:108px;width:12px;height:921px;background:linear-gradient(90deg,rgba(0,0,0,0) 0%,rgba(0,0,0,0.012) 45%,rgba(0,0,0,0.035) 80%,rgba(0,0,0,0.075) 100%);"></div>
</div></body></html>
